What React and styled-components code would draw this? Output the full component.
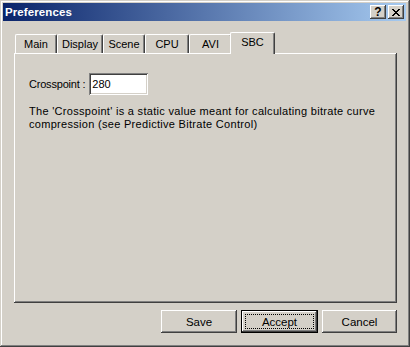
import styled, { createGlobalStyle } from "styled-components";

const GlobalStyle = createGlobalStyle`
  html, body {
    margin: 0;
    padding: 0;
    background: #d4d0c8;
  }
  body {
    font-family: "Liberation Sans", Arial, sans-serif;
    font-size: 11px;
    color: #000000;
  }
`;

const face = "#d4d0c8";

const Window = styled.div`
  width: 410px;
  height: 347px;
  box-sizing: border-box;
  padding: 3px 4px 3px 3px;
  background-color: ${face};
  display: flex;
  flex-direction: column;
  box-shadow: inset -1px -1px #404040, inset 1px 1px ${face},
    inset -2px -2px #808080, inset 2px 2px #ffffff;
`;

const TitleBar = styled.div`
  height: 18px;
  display: flex;
  align-items: center;
  justify-content: space-between;
  padding: 0 2px 0 2px;
  background: linear-gradient(to right, #0a246a, #a6caf0);
`;

const Title = styled.span`
  color: #ffffff;
  font-weight: bold;
  font-size: 11.5px;
  letter-spacing: 0.1px;
`;

const TitleButtons = styled.div`
  display: flex;
  gap: 2px;
`;

const CaptionButton = styled.div`
  width: 16px;
  height: 14px;
  box-sizing: border-box;
  background-color: ${face};
  display: flex;
  align-items: center;
  justify-content: center;
  font-weight: bold;
  font-size: 12px;
  line-height: 14px;
  box-shadow: inset -1px -1px #404040, inset 1px 1px #ffffff,
    inset -2px -2px #808080;
`;

const Body = styled.div`
  flex: 1;
  display: flex;
  flex-direction: column;
  padding: 11px 9px 11px 11px;
`;

const TabRow = styled.div`
  height: 21px;
  display: flex;
  align-items: flex-end;
  padding-left: 1px;
`;

const Tab = styled.div`
  width: ${(p) => (p.$active ? p.$width + 4 : p.$width)}px;
  height: ${(p) => (p.$active ? 22 : 19)}px;
  margin: 0 ${(p) => (p.$active ? -2 : 0)}px
    ${(p) => (p.$active ? -1 : 0)}px;
  box-sizing: border-box;
  position: relative;
  z-index: ${(p) => (p.$active ? 2 : 1)};
  background-color: ${face};
  display: flex;
  align-items: center;
  justify-content: center;
  padding-bottom: ${(p) => (p.$active ? 3 : 0)}px;
  border-top: 1px solid #ffffff;
  border-left: 1px solid #ffffff;
  border-right: 1px solid #404040;
  border-radius: 2px 2px 0 0;
  box-shadow: inset -1px 0 #808080;
`;

const Panel = styled.div`
  height: 250px;
  box-sizing: border-box;
  padding: 20px 15px 0 15px;
  background-color: ${face};
  box-shadow: inset -1px -1px #404040, inset 1px 1px #ffffff,
    inset -2px -2px #808080;
`;

const FieldRow = styled.div`
  display: flex;
  align-items: center;
  gap: 4px;
`;

const Label = styled.span`
  letter-spacing: -0.2px;
`;

const Input = styled.div`
  width: 59px;
  height: 22px;
  box-sizing: border-box;
  padding: 0 3px;
  background-color: #ffffff;
  display: flex;
  align-items: center;
  box-shadow: inset 1px 1px #808080, inset -1px -1px #ffffff,
    inset 2px 2px #404040, inset -2px -2px ${face};
`;

const Note = styled.p`
  margin: 10px 0 0 0;
  line-height: 13px;
  letter-spacing: 0.3px;
`;

const ButtonRow = styled.div`
  display: flex;
  justify-content: flex-end;
  gap: 4px;
  margin-top: 7px;
`;

const Button = styled.div`
  width: ${(p) => p.$width}px;
  height: 23px;
  box-sizing: border-box;
  display: flex;
  align-items: center;
  justify-content: center;
  position: relative;
  font-size: 11.5px;
  background-color: ${face};
  border: ${(p) => (p.$default ? "1px solid #000000" : "none")};
  box-shadow: inset -1px -1px #404040, inset 1px 1px #ffffff,
    inset -2px -2px #808080;
`;

const FocusRing = styled.span`
  position: absolute;
  inset: 3px;
  border: 1px dotted #000000;
`;

const CloseIcon = () => (
  <svg width="8" height="7" viewBox="0 0 8 7" shapeRendering="crispEdges">
    <path
      d="M0 0h2v1H0zM6 0h2v1H6zM1 1h2v1H1zM5 1h2v1H5zM2 2h4v1H2zM3 3h2v1H3zM2 4h4v1H2zM1 5h2v1H1zM5 5h2v1H5zM0 6h2v1H0zM6 6h2v1H6z"
      fill="#000000"
    />
  </svg>
);

const tabs = [
  { label: "Main", width: 42 },
  { label: "Display", width: 46 },
  { label: "Scene", width: 42 },
  { label: "CPU", width: 44 },
  { label: "AVI", width: 43 },
  { label: "SBC", width: 41, active: true },
];

const App = () => {
  return (
    <>
      <GlobalStyle />
      <Window>
        <TitleBar>
          <Title>Preferences</Title>
          <TitleButtons>
            <CaptionButton>?</CaptionButton>
            <CaptionButton>
              <CloseIcon />
            </CaptionButton>
          </TitleButtons>
        </TitleBar>
        <Body>
          <TabRow>
            {tabs.map((t) => (
              <Tab key={t.label} $width={t.width} $active={t.active}>
                {t.label}
              </Tab>
            ))}
          </TabRow>
          <Panel>
            <FieldRow>
              <Label>Crosspoint :</Label>
              <Input>280</Input>
            </FieldRow>
            <Note>
              The 'Crosspoint' is a static value meant for calculating bitrate
              curve compression (see Predictive Bitrate Control)
            </Note>
          </Panel>
          <ButtonRow>
            <Button $width={76}>Save</Button>
            <Button $width={77} $default>
              Accept
              <FocusRing />
            </Button>
            <Button $width={75}>Cancel</Button>
          </ButtonRow>
        </Body>
      </Window>
    </>
  );
};

export default App;
